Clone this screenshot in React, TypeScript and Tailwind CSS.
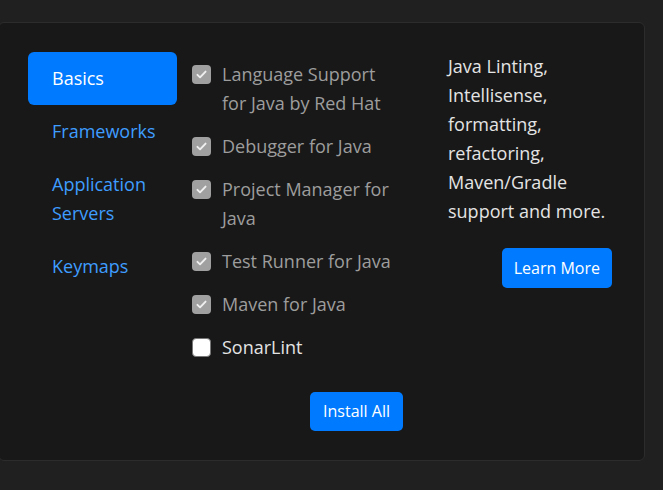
import React, { useState } from 'react';

const navItems = ['Basics', 'Frameworks', 'Application Servers', 'Keymaps'];

const extensions = [
  { name: 'Language Support for Java by Red Hat', checked: true, disabled: true },
  { name: 'Debugger for Java', checked: true, disabled: true },
  { name: 'Project Manager for Java', checked: true, disabled: true },
  { name: 'Test Runner for Java', checked: true, disabled: true },
  { name: 'Maven for Java', checked: true, disabled: true },
  { name: 'SonarLint', checked: false, disabled: false },
];

const Checkbox: React.FC<{ checked: boolean; disabled: boolean }> = ({ checked, disabled }) => {
  if (checked) {
    return (
      <span className={`flex h-[19px] w-[19px] shrink-0 items-center justify-center rounded-[4px] ${disabled ? 'bg-[#a0a0a0]' : 'bg-[#007bff]'}`}>
        <svg viewBox="0 0 16 16" className="h-[13px] w-[13px]" fill="none">
          <path d="M3 8.5l3.2 3L13 4.5" stroke="#efefef" strokeWidth="2.4" strokeLinecap="round" strokeLinejoin="round" />
        </svg>
      </span>
    );
  }
  return <span className="block h-[19px] w-[19px] shrink-0 rounded-[4px] border border-[#777] bg-white" />;
};

const App: React.FC = () => {
  const [active, setActive] = useState('Basics');

  return (
    <div className="min-h-[490px] w-full overflow-hidden bg-[#202020] pt-[22px]" style={{ fontFamily: '"Open Sans", "Noto Sans", sans-serif' }}>
      <div className="ml-[-2px] flex w-[647px] rounded-[6px] border border-[#2c2c2c] bg-[#181818] pb-[29px] pl-[29px] pr-[31px] pt-[29px] text-[18px] leading-[29px]">
        <nav className="flex w-[149px] shrink-0 flex-col">
          {navItems.map((item) => (
            <button
              key={item}
              onClick={() => setActive(item)}
              className={`rounded-[6px] py-[12px] pl-[24px] pr-3 text-left ${
                active === item ? 'bg-[#007bff] text-white' : 'text-[#3f9dff]'
              }`}
            >
              {item}
            </button>
          ))}
        </nav>

        <div className="ml-[15px] flex w-[211px] shrink-0 flex-col pt-[8px]">
          <ul className="flex flex-col gap-[14px]">
            {extensions.map((ext) => (
              <li key={ext.name} className="flex items-start gap-[11px]">
                <span className="mt-[5px]">
                  <Checkbox checked={ext.checked} disabled={ext.disabled} />
                </span>
                <span className={ext.disabled ? 'text-[#9d9d9d]' : 'text-[#e4e4e4]'}>{ext.name}</span>
              </li>
            ))}
          </ul>
          <div className="mt-[30px] flex justify-end">
            <button className="h-[39px] rounded-[5px] bg-[#007bff] px-[13px] text-[16px] text-white">Install All</button>
          </div>
        </div>

        <div className="ml-[45px] flex w-[164px] shrink-0 flex-col">
          <p className="text-[#e4e4e4]">
            Java Linting, Intellisense, formatting, refactoring, Maven/Gradle support and more.
          </p>
          <div className="mt-[22px] flex justify-end">
            <button className="h-[40px] rounded-[5px] bg-[#007bff] px-[12px] text-[16px] text-white">Learn More</button>
          </div>
        </div>
      </div>
    </div>
  );
};

export default App;
